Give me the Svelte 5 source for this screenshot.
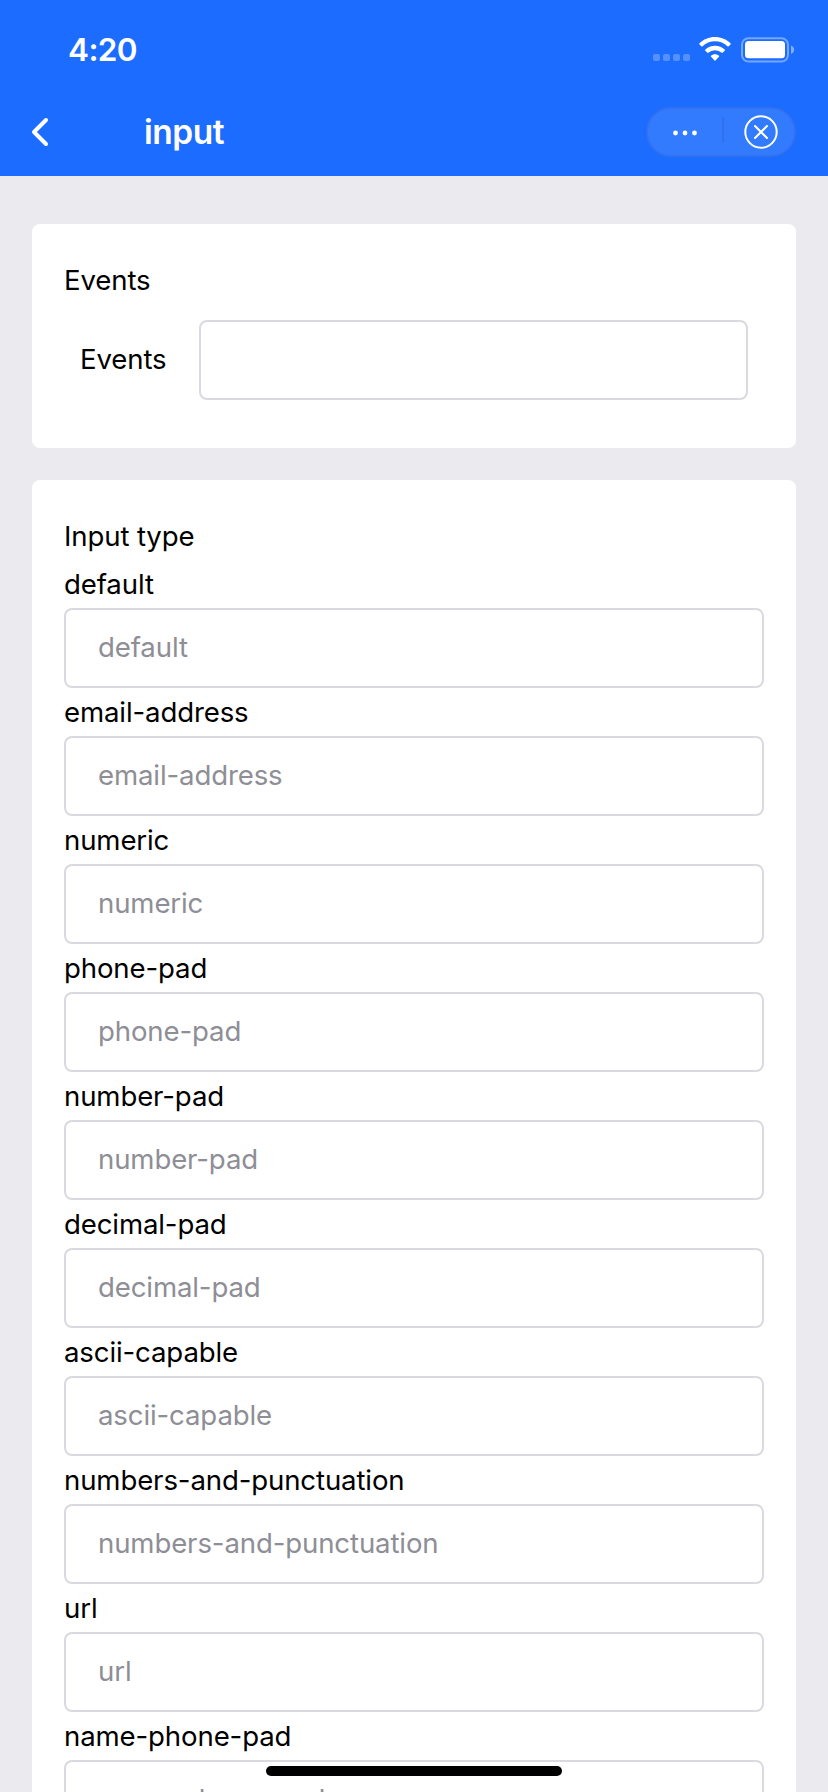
<script>
  const types = [
    'default',
    'email-address',
    'numeric',
    'phone-pad',
    'number-pad',
    'decimal-pad',
    'ascii-capable',
    'numbers-and-punctuation',
    'url',
    'name-phone-pad'
  ];
</script>

<div class="screen">
  <header>
    <div class="status">
      <span class="time">4:20</span>
      <div class="indicators">
        <svg class="signal" width="37" height="7" viewBox="0 0 37 7" fill="#fff" fill-opacity=".25">
          <rect x="0" width="7" height="7" rx="2" />
          <rect x="10" width="7" height="7" rx="2" />
          <rect x="20" width="7" height="7" rx="2" />
          <rect x="30" width="7" height="7" rx="2" />
        </svg>
        <svg class="wifi" width="32" height="24" viewBox="0 0 32 24" fill="#fff">
          <path d="M16 0C22 0 27.6 2.3 31.7 6.4Q32 6.8 31.7 7.2L29.5 9.4Q29.1 9.8 28.7 9.4A18.2 18.2 0 0 0 3.3 9.4Q2.9 9.8 2.5 9.4L.3 7.2Q0 6.8 .3 6.4C4.4 2.3 10 0 16 0Z" />
          <path d="M16 8.8C19.8 8.8 23.200 10.2 25.900 12.700Q26.300 13.100 25.900 13.500L23.600 15.800Q23.200 16.100 22.800 15.800A10 10 0 0 0 9.200 15.800Q8.800 16.100 8.400 15.800L6.100 13.500Q5.700 13.100 6.100 12.700C8.800 10.200 12.200 8.800 16 8.800Z" />
          <path d="M16 17.200C17.600 17.200 19 17.800 20.100 18.800Q20.500 19.200 20.100 19.600L16.500 23.400Q16 23.900 15.500 23.400L11.900 19.600Q11.500 19.200 11.900 18.800C13 17.800 14.400 17.200 16 17.200Z" />
        </svg>
        <svg class="battery" width="54" height="26" viewBox="0 0 54 26">
          <rect x="1" y="1.200" width="46" height="23.300" rx="6.500" fill="none" stroke="#fff" stroke-opacity=".4" stroke-width="2" />
          <rect x="4" y="4" width="40" height="17.200" rx="3.500" fill="#fff" />
          <path d="M50 8.500C52 9.200 53.200 10.900 53.200 12.800S52 16.300 50 17Z" fill="#fff" fill-opacity=".45" />
        </svg>
      </div>
    </div>
    <div class="nav">
      <svg class="back" width="20" height="32" viewBox="0 0 20 32" fill="none" stroke="#fff" stroke-width="4" stroke-linecap="round" stroke-linejoin="round">
        <path d="M16 4L4 16L16 28" />
      </svg>
      <h1>input</h1>
      <div class="capsule">
        <svg width="150" height="50" viewBox="0 0 150 50">
          <rect x="1" y="1" width="148" height="48" rx="24" fill="#fff" fill-opacity=".1" stroke="#3771ec" stroke-opacity=".8" stroke-width="2" />
          <rect x="76" y="10" width="2" height="26" fill="#2e70ee" />
          <g fill="#fff">
            <circle cx="29.500" cy="26" r="2.400" />
            <circle cx="39" cy="26" r="2.400" />
            <circle cx="48.500" cy="26" r="2.400" />
          </g>
          <g fill="none" stroke="#fff" stroke-width="2" stroke-linecap="round">
            <circle cx="115" cy="25" r="15.700" />
            <path d="M109 19L121 31M121 19L109 31" />
          </g>
        </svg>
      </div>
    </div>
  </header>

  <main>
    <section>
      <h2>Events</h2>
      <div class="event-row">
        <label for="events">Events</label>
        <input id="events" type="text" />
      </div>
    </section>

    <section>
      <h2>Input type</h2>
      {#each types as type}
        <label for={type}>{type}</label>
        <input id={type} type="text" placeholder={type} />
      {/each}
    </section>
  </main>

  <div class="home-indicator"></div>
</div>

<style>
  :global(body) {
    background: #ebebef;
  }

  .screen {
    position: relative;
    width: 828px;
    height: 1792px;
    overflow: hidden;
    background: #ebebef;
    color: #000;
    font-family: Inter, 'Liberation Sans', sans-serif;
    font-size: 27.6px;
    letter-spacing: -0.13px;
    line-height: 48px;
  }

  header {
    height: 176px;
    background: #1b6cff;
    color: #fff;
  }

  .status {
    display: flex;
    align-items: flex-start;
    justify-content: space-between;
    box-sizing: border-box;
    height: 88px;
    padding: 25px 33px 0 68px;
  }

  .time {
    padding-top: 1px;
    font-size: 31.5px;
    font-weight: 600;
    letter-spacing: -0.6px;
  }

  .indicators {
    display: flex;
    align-items: flex-start;
    padding-top: 12px;
  }

  .signal {
    margin-top: 17px;
  }

  .wifi {
    margin-left: 9px;
  }

  .battery {
    margin-left: 10px;
  }

  .nav {
    display: flex;
    align-items: center;
    height: 88px;
    padding: 0 32px 0 30px;
  }

  h1 {
    margin: 0 0 0 94px;
    font-size: 33.5px;
    font-weight: 600;
    letter-spacing: -0.5px;
  }

  .capsule {
    display: flex;
    margin-left: auto;
  }

  main {
    display: flex;
    flex-direction: column;
    gap: 32px;
    padding: 48px 32px 0;
  }

  section {
    padding: 32px;
    border-radius: 8px;
    background: #fff;
  }

  h2 {
    margin: 0;
    font-size: inherit;
    font-weight: 400;
  }

  label {
    display: block;
  }

  input {
    display: block;
    box-sizing: border-box;
    width: 100%;
    height: 80px;
    margin: 0;
    padding: 0 32px 2px;
    border: 2px solid #d9d9e0;
    border-radius: 8px;
    outline: none;
    background: #fff;
    font: inherit;
    letter-spacing: inherit;
  }

  input::placeholder {
    color: #8e8e96;
    opacity: 1;
  }

  .event-row {
    display: grid;
    grid-template-columns: 119px 1fr;
    align-items: center;
    padding: 16px;
  }

  .event-row label {
    padding-bottom: 2px;
  }

  .home-indicator {
    position: absolute;
    left: 266px;
    top: 1766px;
    width: 296px;
    height: 10px;
    border-radius: 5px;
    background: #000;
  }
</style>
